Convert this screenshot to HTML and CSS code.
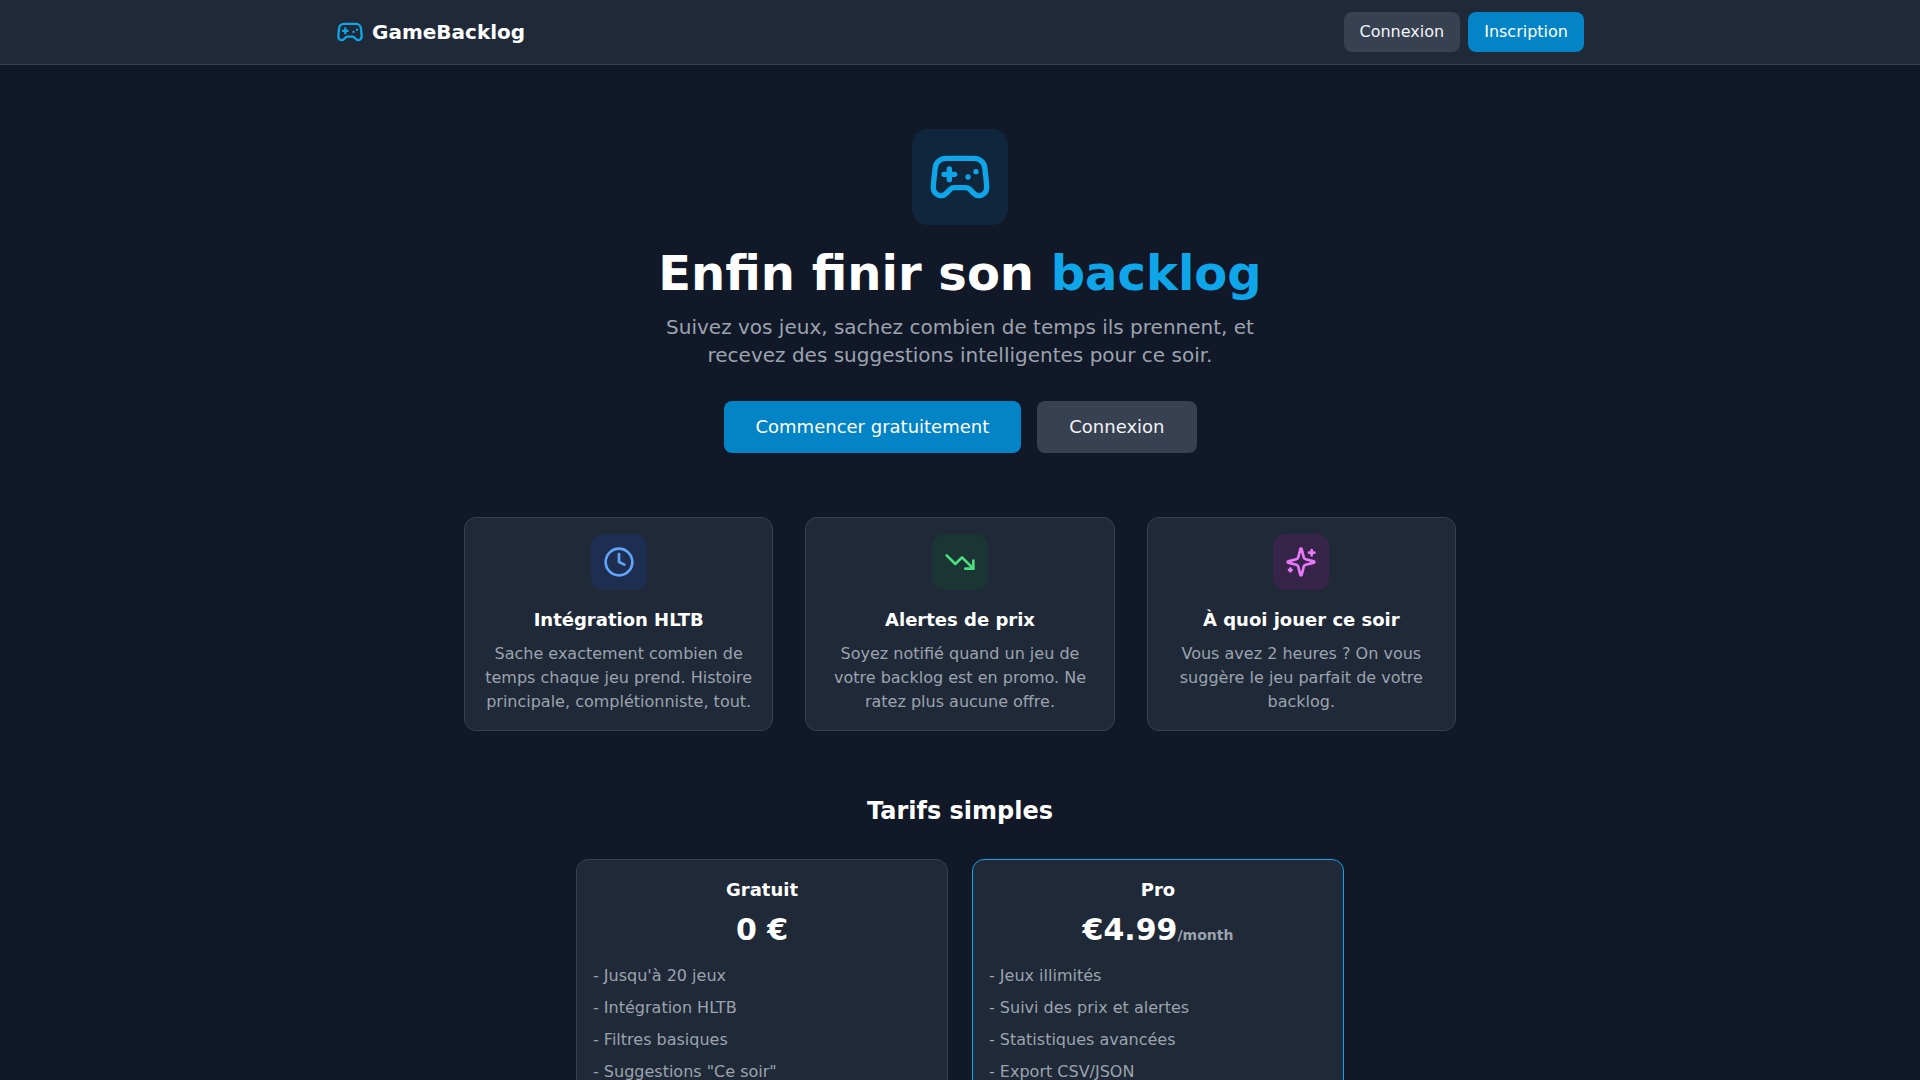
FILE: index.html
```
<!DOCTYPE html>
<html lang="fr">
<head>
    <meta charset="UTF-8">
    <meta name="viewport" content="width=device-width, initial-scale=1.0">
    <title>GameBacklog</title>
    <link rel="stylesheet" href="styles.css">
</head>
<body>
    <header class="navbar">
        <div class="navbar-inner">
            <a href="#" class="brand">
                <svg class="icon brand-icon" viewBox="0 0 24 24" aria-hidden="true">
                    <path d="M6 11h4M8 9v4M15 12h.01M18 10h.01"/>
                    <path d="M17.32 5H6.68a4 4 0 0 0-3.978 3.59c-.006.052-.01.101-.017.152C2.604 9.416 2 14.456 2 16a3 3 0 0 0 3 3c1 0 1.5-.5 2-1l1.414-1.414A2 2 0 0 1 9.828 16h4.344a2 2 0 0 1 1.414.586L17 18c.5.5 1 1 2 1a3 3 0 0 0 3-3c0-1.545-.604-6.584-.685-7.258-.007-.05-.011-.1-.017-.151A4 4 0 0 0 17.32 5z"/>
                </svg>
                <span>GameBacklog</span>
            </a>
            <nav class="nav-links">
                <a href="#" class="btn btn-secondary">Connexion</a>
                <a href="#" class="btn btn-primary">Inscription</a>
            </nav>
        </div>
    </header>

    <main class="page">
        <section class="hero">
            <div class="hero-icon">
                <svg class="icon" viewBox="0 0 24 24" aria-hidden="true">
                    <path d="M6 11h4M8 9v4M15 12h.01M18 10h.01"/>
                    <path d="M17.32 5H6.68a4 4 0 0 0-3.978 3.59c-.006.052-.01.101-.017.152C2.604 9.416 2 14.456 2 16a3 3 0 0 0 3 3c1 0 1.5-.5 2-1l1.414-1.414A2 2 0 0 1 9.828 16h4.344a2 2 0 0 1 1.414.586L17 18c.5.5 1 1 2 1a3 3 0 0 0 3-3c0-1.545-.604-6.584-.685-7.258-.007-.05-.011-.1-.017-.151A4 4 0 0 0 17.32 5z"/>
                </svg>
            </div>
            <h1>Enfin finir son <span class="accent">backlog</span></h1>
            <p class="subtitle">Suivez vos jeux, sachez combien de temps ils prennent, et recevez des suggestions intelligentes pour ce soir.</p>
            <div class="hero-actions">
                <a href="#" class="btn btn-large btn-primary">Commencer gratuitement</a>
                <a href="#" class="btn btn-large btn-secondary">Connexion</a>
            </div>
        </section>

        <section class="features">
            <div class="card feature">
                <div class="feature-icon blue">
                    <svg class="icon" viewBox="0 0 24 24" aria-hidden="true">
                        <circle cx="12" cy="12" r="10"/>
                        <path d="M12 6v6l4 2"/>
                    </svg>
                </div>
                <h3>Intégration HLTB</h3>
                <p>Sache exactement combien de temps chaque jeu prend. Histoire principale, complétionniste, tout.</p>
            </div>
            <div class="card feature">
                <div class="feature-icon green">
                    <svg class="icon" viewBox="0 0 24 24" aria-hidden="true">
                        <path d="M22 17l-8.500-8.500-5 5L2 7"/>
                        <path d="M16 17h6v-6"/>
                    </svg>
                </div>
                <h3>Alertes de prix</h3>
                <p>Soyez notifié quand un jeu de votre backlog est en promo. Ne ratez plus aucune offre.</p>
            </div>
            <div class="card feature">
                <div class="feature-icon pink">
                    <svg class="icon" viewBox="0 0 24 24" aria-hidden="true">
                        <path d="M9.937 15.5A2 2 0 0 0 8.5 14.063l-6.135-1.582a.5.5 0 0 1 0-.962L8.5 9.936A2 2 0 0 0 9.937 8.5l1.582-6.135a.5.5 0 0 1 .963 0L14.063 8.5A2 2 0 0 0 15.5 9.937l6.135 1.581a.5.5 0 0 1 0 .964L15.5 14.063a2 2 0 0 0-1.437 1.437l-1.582 6.135a.5.5 0 0 1-.963 0z"/>
                        <path d="M20 3v4M22 5h-4M4 17v2M5 18H3"/>
                    </svg>
                </div>
                <h3>À quoi jouer ce soir</h3>
                <p>Vous avez 2 heures ? On vous suggère le jeu parfait de votre backlog.</p>
            </div>
        </section>

        <section class="pricing">
            <h2>Tarifs simples</h2>
            <div class="plans">
                <div class="card plan">
                    <h3>Gratuit</h3>
                    <p class="price">0 €</p>
                    <ul>
                        <li>- Jusqu'à 20 jeux</li>
                        <li>- Intégration HLTB</li>
                        <li>- Filtres basiques</li>
                        <li>- Suggestions "Ce soir"</li>
                    </ul>
                </div>
                <div class="card plan plan-pro">
                    <h3>Pro</h3>
                    <p class="price">€4.99<span class="period">/month</span></p>
                    <ul>
                        <li>- Jeux illimités</li>
                        <li>- Suivi des prix et alertes</li>
                        <li>- Statistiques avancées</li>
                        <li>- Export CSV/JSON</li>
                    </ul>
                </div>
            </div>
        </section>
    </main>
</body>
</html>
```
FILE: styles.css
```
* { box-sizing: border-box; }
body { margin: 0; background-color: #111827; color: #fff; font-family: "DejaVu Sans", sans-serif; font-size: 16px; line-height: 24px; }
h1, h2, h3, p, ul { margin: 0; }
a { color: inherit; text-decoration: none; }

.icon { display: block; fill: none; stroke: currentColor; stroke-width: 2; stroke-linecap: round; stroke-linejoin: round; }

/* Navigation */
.navbar { background-color: #1f2937; border-bottom: 1px solid #374151; }
.navbar-inner { display: flex; align-items: center; justify-content: space-between; max-width: 1280px; margin: 0 auto; padding: 12px 16px; }
.brand { display: flex; align-items: center; gap: 8px; font-size: 20px; line-height: 28px; font-weight: bold; }
.brand-icon { width: 28px; height: 28px; color: #0ea5e9; }
.nav-links { display: flex; gap: 8px; }

/* Buttons */
.btn { padding: 8px 16px; border-radius: 8px; color: #fff; }
.btn-primary { background-color: #0284c7; }
.btn-primary:hover { background-color: #0369a1; }
.btn-secondary { background-color: #374151; color: #f3f4f6; }
.btn-secondary:hover { background-color: #4b5563; }
.btn-large { padding: 12px 32px; font-size: 18px; line-height: 28px; }

/* Hero */
.page { max-width: 1024px; margin: 0 auto; padding: 64px 16px; }
.hero { text-align: center; margin-bottom: 64px; }
.hero-icon { display: flex; align-items: center; justify-content: center; width: 96px; height: 96px; margin: 0 auto 24px; border-radius: 16px; background-color: rgba(12, 74, 110, 0.3); color: #0ea5e9; }
.hero-icon .icon { width: 64px; height: 64px; }
.hero h1 { margin-bottom: 16px; font-size: 48px; line-height: 48px; }
.accent { color: #0ea5e9; }
.subtitle { max-width: 640px; margin: 0 auto 32px; color: #9ca3af; font-size: 20px; line-height: 28px; }
.hero-actions { display: flex; flex-wrap: wrap; justify-content: center; gap: 16px; }

/* Cards */
.card { padding: 16px; border: 1px solid #374151; border-radius: 12px; background-color: #1f2937; }
.card h3 { margin-bottom: 8px; font-size: 18px; line-height: 28px; text-align: center; }

.features { display: grid; grid-template-columns: repeat(3, 1fr); gap: 32px; margin-bottom: 64px; }
.feature { text-align: center; }
.feature p { color: #9ca3af; }
.feature-icon { display: flex; align-items: center; justify-content: center; width: 56px; height: 56px; margin: 0 auto 16px; border-radius: 12px; }
.feature-icon .icon { width: 32px; height: 32px; }
.blue { background-color: rgba(30, 58, 138, 0.3); color: #60a5fa; }
.green { background-color: rgba(20, 83, 45, 0.3); color: #4ade80; }
.pink { background-color: rgba(112, 26, 117, 0.3); color: #e879f9; }

/* Pricing */
.pricing h2 { margin-bottom: 32px; font-size: 24px; line-height: 32px; text-align: center; }
.plans { display: grid; grid-template-columns: repeat(2, 1fr); gap: 24px; max-width: 768px; margin: 0 auto; }
.plan-pro { border-color: #0ea5e9; }
.price { margin-bottom: 16px; font-size: 30px; line-height: 36px; font-weight: bold; text-align: center; }
.period { color: #9ca3af; font-size: 14px; line-height: 20px; }
.plan ul { display: flex; flex-direction: column; gap: 8px; padding: 0; list-style: none; color: #9ca3af; }

@media (max-width: 768px) {
    .features, .plans { grid-template-columns: 1fr; }
}
```
